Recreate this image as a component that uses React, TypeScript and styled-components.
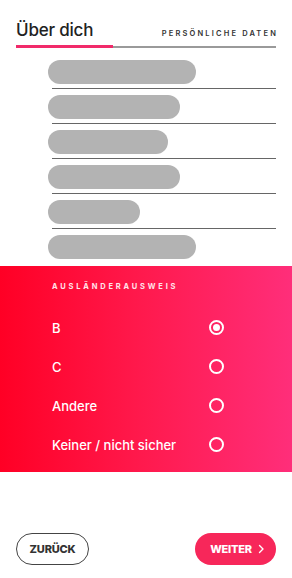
import React, { useState } from "react";
import styled, { createGlobalStyle } from "styled-components";

const GlobalStyle = createGlobalStyle`
  html, body {
    margin: 0;
    padding: 0;
    background: #ffffff;
  }
  body {
    font-family: Inter, "Open Sans", Arial, sans-serif;
    -webkit-font-smoothing: antialiased;
  }
`;

const skeletonWidths = [148, 132, 120, 132, 92, 148];
const options = ["B", "C", "Andere", "Keiner / nicht sicher"];

const App = () => {
  const [selected, setSelected] = useState(0);

  return (
    <Page>
      <GlobalStyle />
      <Header>
        <TitleRow>
          <Title>Über dich</Title>
          <StepLabel>PERSÖNLICHE DATEN</StepLabel>
        </TitleRow>
        <Progress>
          <ProgressFill />
        </Progress>
      </Header>

      <SkeletonList>
        {skeletonWidths.map((w, i) => (
          <SkeletonRow key={i} $last={i === skeletonWidths.length - 1}>
            <SkeletonBar style={{ width: w }} />
          </SkeletonRow>
        ))}
      </SkeletonList>

      <Panel>
        <PanelLabel>AUSLÄNDERAUSWEIS</PanelLabel>
        {options.map((opt, i) => (
          <OptionRow key={opt} onClick={() => setSelected(i)}>
            <OptionText>{opt}</OptionText>
            <Radio $checked={selected === i} />
          </OptionRow>
        ))}
      </Panel>

      <Footer>
        <BackButton>ZURÜCK</BackButton>
        <NextButton>
          WEITER
          <svg width="8" height="10" viewBox="0 0 8 10" fill="none">
            <path
              d="M2.5 1.5L6 5L2.5 8.5"
              stroke="#ffffff"
              strokeWidth="1.4"
              strokeLinecap="round"
              strokeLinejoin="round"
            />
          </svg>
        </NextButton>
      </Footer>
    </Page>
  );
};

export default App;

const Page = styled.div`
  width: 292px;
  min-height: 578px;
  display: flex;
  flex-direction: column;
`;

const Header = styled.div`
  padding: 20px 16px 0 16px;
`;

const TitleRow = styled.div`
  display: flex;
  justify-content: space-between;
  align-items: baseline;
  height: 24px;
`;

const Title = styled.h1`
  margin: 0;
  font-size: 17px;
  font-weight: 500;
  color: #222222;
  letter-spacing: -0.2px;
`;

const StepLabel = styled.span`
  font-size: 7.5px;
  font-weight: 600;
  letter-spacing: 2.15px;
  margin-right: -2px;
  color: #333333;
`;

const Progress = styled.div`
  margin-top: 1px;
  height: 3px;
  display: flex;
  align-items: center;
  background: linear-gradient(#9a9a9a, #9a9a9a) center / 100% 2px no-repeat;
`;

const ProgressFill = styled.div`
  width: 97px;
  height: 3px;
  background: #f12a6a;
`;

const SkeletonList = styled.div`
  margin-top: 12px;
  padding: 0 16px 0 48px;
  display: flex;
  flex-direction: column;
`;

const SkeletonRow = styled.div<{ $last: boolean }>`
  display: flex;
  flex-direction: column;
  margin-bottom: ${(p) => (p.$last ? "0" : "6px")};
  ${(p) =>
    p.$last
      ? ""
      : `
    &::after {
      content: "";
      display: block;
      height: 1px;
      margin: 4px 0 0 4px;
      background: #666666;
    }
  `}
`;

const SkeletonBar = styled.div`
  height: 24px;
  border-radius: 12px;
  background: #b3b3b3;
`;

const Panel = styled.div`
  margin-top: 7px;
  height: 206px;
  box-sizing: border-box;
  padding: 16px 68px 0 52px;
  background: linear-gradient(90deg, #ff0025 0%, #ff1a4e 50%, #ff2e7a 100%);
  display: flex;
  flex-direction: column;
`;

const PanelLabel = styled.div`
  font-size: 7.5px;
  font-weight: 700;
  letter-spacing: 2.8px;
  line-height: 10px;
  color: #ffe4ea;
  margin-bottom: 16px;
`;

const OptionRow = styled.div`
  height: 39px;
  display: flex;
  align-items: center;
  justify-content: space-between;
  cursor: pointer;
`;

const OptionText = styled.span`
  font-size: 13px;
  font-weight: 500;
  color: #ffffff;
`;

const Radio = styled.span<{ $checked: boolean }>`
  width: 15px;
  height: 15px;
  box-sizing: border-box;
  border: 2px solid #ffffff;
  border-radius: 50%;
  display: flex;
  align-items: center;
  justify-content: center;

  &::after {
    content: "";
    width: 7px;
    height: 7px;
    border-radius: 50%;
    background: #ffffff;
    display: ${(p) => (p.$checked ? "block" : "none")};
  }
`;

const Footer = styled.div`
  margin-top: 61px;
  padding: 0 16px;
  display: flex;
  justify-content: space-between;
`;

const BackButton = styled.button`
  width: 73px;
  height: 32px;
  border: 1px solid #444444;
  border-radius: 16px;
  background: #ffffff;
  color: #333333;
  font-family: Inter, Arial, sans-serif;
  font-size: 11px;
  font-weight: 800;
  letter-spacing: -0.2px;
  padding: 0;
`;

const NextButton = styled.button`
  width: 81px;
  height: 32px;
  border: none;
  border-radius: 16px;
  background: #f7275a;
  color: #ffffff;
  font-family: Inter, Arial, sans-serif;
  font-size: 11px;
  font-weight: 800;
  letter-spacing: -0.2px;
  padding: 0 0 0 4px;
  display: flex;
  align-items: center;
  justify-content: center;
  gap: 5px;
`;
